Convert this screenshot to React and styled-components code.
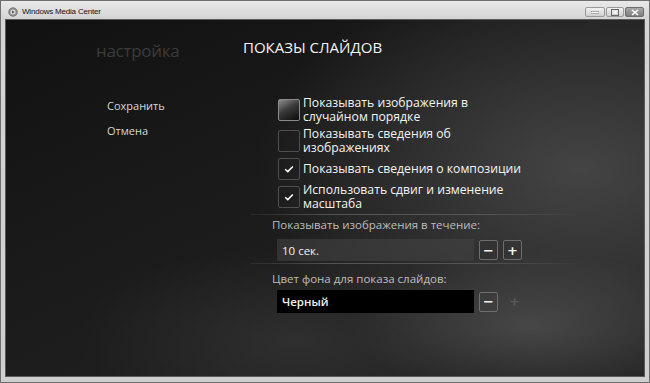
import React from 'react'
import styled, { createGlobalStyle } from 'styled-components'

const Global = createGlobalStyle`
  html, body {
    margin: 0;
    padding: 0;
    background: #ffffff;
  }
  #root {
    width: 650px;
    height: 383px;
  }
`

export default function App() {
  const options = [
    { text: 'Показывать изображения в\nслучайном порядке', state: 'focus' },
    { text: 'Показывать сведения об\nизображениях', state: 'off' },
    { text: 'Показывать сведения о композиции', state: 'on' },
    { text: 'Использовать сдвиг и изменение\nмасштаба', state: 'on' },
  ]

  return (
    <Window>
      <Global />
      <TitleBar>
        <AppIcon viewBox="0 0 10 10">
          <circle cx="5" cy="5" r="4.3" fill="#8a8a8a" stroke="#5c5c5c" strokeWidth="0.6" />
          <circle cx="5" cy="5" r="2.6" fill="#d8d8d8" />
          <path d="M4 3.6 L6.6 5 L4 6.4 Z" fill="#555" />
        </AppIcon>
        <TitleText>Windows Media Center</TitleText>
        <Controls>
          <CtrlButton $w={20}>
            <svg width="8" height="3" viewBox="0 0 8 3"><rect x="0" y="0.5" width="8" height="2" fill="#fff" stroke="#666" strokeWidth="0.5" /></svg>
          </CtrlButton>
          <CtrlButton $w={18}>
            <svg width="8" height="7" viewBox="0 0 8 7"><rect x="0.5" y="0.5" width="7" height="6" fill="none" stroke="#666" strokeWidth="1" /><rect x="2.5" y="2.5" width="3" height="2" fill="#fff" /></svg>
          </CtrlButton>
          <CtrlButton $w={19} $close>
            <svg width="8" height="7" viewBox="0 0 8 7"><path d="M1 1 L7 6 M7 1 L1 6" stroke="#fff" strokeWidth="1.6" /></svg>
          </CtrlButton>
        </Controls>
      </TitleBar>

      <Content>
        <Sidebar>
          <Breadcrumb>настройка</Breadcrumb>
          <Nav>
            <NavItem>Сохранить</NavItem>
            <NavItem>Отмена</NavItem>
          </Nav>
        </Sidebar>

        <Main>
          <PageTitle>ПОКАЗЫ СЛАЙДОВ</PageTitle>
          <Options>
            {options.map((o, i) => (
              <OptionRow key={i}>
                <Box $state={o.state}>
                  {o.state === 'on' && (
                    <svg width="10" height="8" viewBox="0 0 10 8">
                      <path d="M1.2 4.2 L3.8 6.6 L8.8 1.4" fill="none" stroke="#fff" strokeWidth="1.5" />
                    </svg>
                  )}
                </Box>
                <OptionText>{o.text}</OptionText>
              </OptionRow>
            ))}
          </Options>

          <Divider $top={3} />
          <FieldLabel $top={2}>Показывать изображения в течение:</FieldLabel>
          <FieldRow $top={6}>
            <ValueBox>10 сек.</ValueBox>
            <StepButton>−</StepButton>
            <StepButton>+</StepButton>
          </FieldRow>
          <Divider $top={2} />
          <FieldLabel $top={7}>Цвет фона для показа слайдов:</FieldLabel>
          <FieldRow $top={3}>
            <ValueBox $black>Черный</ValueBox>
            <StepButton>−</StepButton>
            <StepButton $disabled>+</StepButton>
          </FieldRow>
        </Main>
      </Content>
    </Window>
  )
}

const Window = styled.div`
  box-sizing: border-box;
  width: 650px;
  height: 383px;
  display: flex;
  flex-direction: column;
  border: 1px solid #6e6e6e;
  background: linear-gradient(to bottom, #e9e9e9 0px, #d4d4d4 18px, #cfcfcf 100%);
  padding: 0 4px 5px 4px;
`

const TitleBar = styled.div`
  height: 18px;
  display: flex;
  align-items: flex-start;
  font-family: "Liberation Sans", Arial, sans-serif;
`

const AppIcon = styled.svg`
  width: 10px;
  height: 10px;
  margin: 6px 4px 0 3px;
`

const TitleText = styled.span`
  margin-top: 6px;
  font-size: 8px;
  letter-spacing: -0.2px;
  color: #111;
`

const Controls = styled.div`
  margin-left: auto;
  margin-top: 6px;
  margin-right: 1px;
  display: flex;
  gap: 1px;
`

const CtrlButton = styled.div`
  box-sizing: border-box;
  width: ${p => p.$w}px;
  height: 10px;
  border: 1px solid ${p => (p.$close ? '#6d6d6d' : '#9a9a9a')};
  border-radius: 2px;
  background: ${p =>
    p.$close
      ? 'linear-gradient(to bottom, #a8a8a8, #7f7f7f)'
      : 'linear-gradient(to bottom, #f1f1f1, #cfcfcf)'};
  display: flex;
  align-items: center;
  justify-content: center;
`

const Content = styled.div`
  flex: 1;
  display: flex;
  border: 1px solid #5a5a5a;
  background:
    radial-gradient(ellipse 40% 30% at 82% 86%, rgba(95, 95, 95, 0.55), transparent 70%),
    radial-gradient(ellipse 45% 35% at 45% 90%, rgba(70, 70, 70, 0.4), transparent 75%),
    radial-gradient(ellipse 65% 75% at 90% 42%, #444444, transparent 78%),
    linear-gradient(155deg, #111111 0%, #191919 35%, #252525 100%);
  font-family: "Open Sans", "Noto Sans", sans-serif;
  overflow: hidden;
`

const Sidebar = styled.div`
  width: 147px;
  padding-left: 90px;
  display: flex;
  flex-direction: column;
`

const Breadcrumb = styled.div`
  margin-top: 19px;
  font-size: 17px;
  line-height: 24px;
  color: #3b3b3b;
  letter-spacing: -0.3px;
`

const Nav = styled.div`
  margin-top: 35px;
  padding-left: 11px;
  display: flex;
  flex-direction: column;
  gap: 9px;
`

const NavItem = styled.div`
  font-size: 11px;
  line-height: 16px;
  color: #d6d6d6;
`

const Main = styled.div`
  flex: 1;
  display: flex;
  flex-direction: column;
`

const PageTitle = styled.div`
  margin-top: 17px;
  font-size: 15px;
  line-height: 20px;
  color: #f2f2f2;
`

const Options = styled.div`
  margin-top: 39px;
  margin-left: 35px;
  display: flex;
  flex-direction: column;
  gap: 3px;
`

const OptionRow = styled.div`
  display: flex;
  align-items: center;
  gap: 3px;
`

const Box = styled.div`
  box-sizing: border-box;
  flex: none;
  width: 22px;
  height: 22px;
  border: 1px solid ${p => (p.$state === 'focus' ? '#8a8a8a' : '#4e4e4e')};
  border-radius: 2px;
  display: flex;
  align-items: center;
  justify-content: center;
  background: ${p =>
    p.$state === 'focus'
      ? 'linear-gradient(150deg, #8c8c8c 0%, #3a3a3a 45%, #0c0c0c 100%)'
      : 'transparent'};
`

const OptionText = styled.div`
  white-space: pre-line;
  font-size: 12.2px;
  line-height: 14px;
  color: #f4f4f4;
`

const Divider = styled.div`
  margin-top: ${p => p.$top}px;
  margin-left: 7px;
  width: 330px;
  height: 1px;
  background: linear-gradient(to right, rgba(255, 255, 255, 0.05), rgba(255, 255, 255, 0.22) 25%, rgba(255, 255, 255, 0.16) 70%, rgba(255, 255, 255, 0));
`

const FieldLabel = styled.div`
  margin-top: ${p => p.$top}px;
  margin-left: 29px;
  font-size: 11.5px;
  line-height: 16px;
  color: #bdbdbd;
`

const FieldRow = styled.div`
  margin-top: ${p => p.$top}px;
  margin-left: 34px;
  display: flex;
  align-items: center;
  gap: 5px;
`

const ValueBox = styled.div`
  box-sizing: border-box;
  width: 197px;
  height: ${p => (p.$black ? 23 : 22)}px;
  padding-left: 5px;
  display: flex;
  align-items: center;
  font-size: 11.5px;
  color: #f0f0f0;
  font-weight: ${p => (p.$black ? 600 : 400)};
  background: ${p => (p.$black ? '#000000' : 'rgba(70, 70, 70, 0.55)')};
`

const StepButton = styled.div`
  box-sizing: border-box;
  width: 19px;
  height: 20px;
  margin-left: ${p => (p.$disabled ? 2 : 0)}px;
  border: 1px solid ${p => (p.$disabled ? 'transparent' : '#6e6e6e')};
  border-radius: 2px;
  display: flex;
  align-items: center;
  justify-content: center;
  font-family: "DejaVu Sans", sans-serif;
  font-size: 13px;
  font-weight: 700;
  color: ${p => (p.$disabled ? '#5a5a5a' : '#f2f2f2')};
`
